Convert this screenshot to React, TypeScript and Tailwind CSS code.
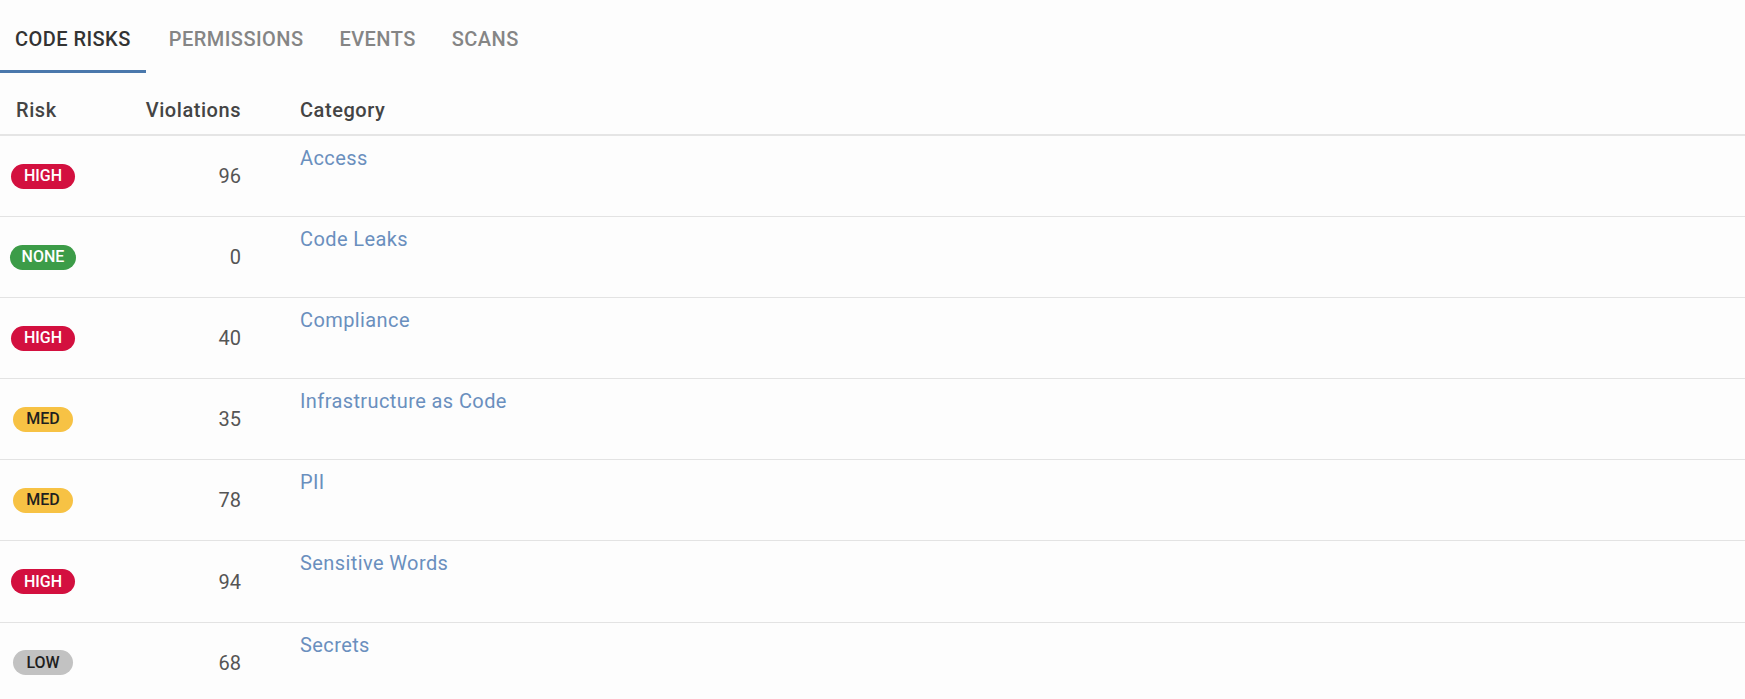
import React from "react";

type Risk = "HIGH" | "NONE" | "MED" | "LOW";

const rows: { risk: Risk; count: number; category: string }[] = [
  { risk: "HIGH", count: 96, category: "Access" },
  { risk: "NONE", count: 0, category: "Code Leaks" },
  { risk: "HIGH", count: 40, category: "Compliance" },
  { risk: "MED", count: 35, category: "Infrastructure as Code" },
  { risk: "MED", count: 78, category: "PII" },
  { risk: "HIGH", count: 94, category: "Sensitive Words" },
  { risk: "LOW", count: 68, category: "Secrets" },
];

function Badge({ risk }: { risk: Risk }) {
  const cls =
    risk === "HIGH"
      ? "bg-[#d3103f] text-white px-[13px]"
      : risk === "NONE"
      ? "bg-[#3c9c48] text-white px-[12px]"
      : risk === "MED"
      ? "bg-[#f7c244] text-[#1f1f1f] px-[13px]"
      : "bg-[#c2c2c2] text-[#1f1f1f] px-[13px]";
  return (
    <span
      className={`inline-flex h-[25px] items-center rounded-full text-[16px] font-medium leading-none ${cls}`}
    >
      {risk}
    </span>
  );
}

export default function App() {
  const tabs = ["CODE RISKS", "PERMISSIONS", "EVENTS", "SCANS"];
  return (
    <div
      className="h-[699px] w-full overflow-hidden bg-[#fdfdfd]"
      style={{ fontFamily: "Roboto, 'Liberation Sans', sans-serif" }}
    >
      <div className="flex h-[73px] items-stretch tracking-[0.45px]">
        {tabs.map((t, i) => (
          <div
            key={t}
            className={
              i === 0
                ? "relative flex items-center px-[15px] pt-[5px] text-[20px] font-medium text-[#333333]"
                : i === 1
                ? "flex items-center pl-[23px] pr-[18px] pt-[5px] text-[20px] font-medium text-[#858585]"
                : "flex items-center px-[18px] pt-[5px] text-[20px] font-medium text-[#858585]"
            }
          >
            {t}
            {i === 0 && (
              <span className="absolute bottom-0 left-0 h-[3px] w-full bg-[#4a78ac]" />
            )}
          </div>
        ))}
      </div>

      <div className="grid h-[63px] grid-cols-[86px_155px_1fr] items-center border-b-2 border-[#e5e5e5] pt-[12px] text-[20px] font-medium tracking-[0.55px] text-[#444444]">
        <div className="pl-[16px]">Risk</div>
        <div className="text-right">Violations</div>
        <div className="pl-[59px]">Category</div>
      </div>

      {rows.map((r) => (
        <div
          key={r.category}
          className="grid h-[81.1px] grid-cols-[86px_155px_1fr] border-b border-[#e3e3e3]"
        >
          <div className="flex items-center justify-center">
            <Badge risk={r.risk} />
          </div>
          <div className="flex items-center justify-end text-[20px] text-[#555555]">
            {r.count}
          </div>
          <div className="pl-[59px] pt-[10px] text-[20px] leading-[24px] tracking-[0.4px] text-[#6a8fbe]">
            {r.category}
          </div>
        </div>
      ))}
    </div>
  );
}
